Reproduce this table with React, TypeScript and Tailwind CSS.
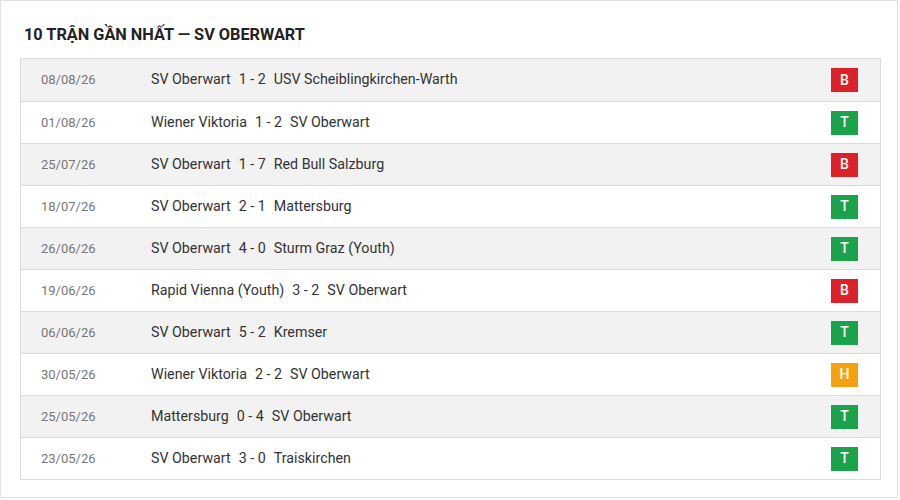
const matches = [
  { date: '08/08/26', home: 'SV Oberwart', score: '1 - 2', away: 'USV Scheiblingkirchen-Warth', result: 'B' },
  { date: '01/08/26', home: 'Wiener Viktoria', score: '1 - 2', away: 'SV Oberwart', result: 'T' },
  { date: '25/07/26', home: 'SV Oberwart', score: '1 - 7', away: 'Red Bull Salzburg', result: 'B' },
  { date: '18/07/26', home: 'SV Oberwart', score: '2 - 1', away: 'Mattersburg', result: 'T' },
  { date: '26/06/26', home: 'SV Oberwart', score: '4 - 0', away: 'Sturm Graz (Youth)', result: 'T' },
  { date: '19/06/26', home: 'Rapid Vienna (Youth)', score: '3 - 2', away: 'SV Oberwart', result: 'B' },
  { date: '06/06/26', home: 'SV Oberwart', score: '5 - 2', away: 'Kremser', result: 'T' },
  { date: '30/05/26', home: 'Wiener Viktoria', score: '2 - 2', away: 'SV Oberwart', result: 'H' },
  { date: '25/05/26', home: 'Mattersburg', score: '0 - 4', away: 'SV Oberwart', result: 'T' },
  { date: '23/05/26', home: 'SV Oberwart', score: '3 - 0', away: 'Traiskirchen', result: 'T' },
]

const badgeColor: Record<string, string> = {
  B: 'bg-[#db2228]',
  T: 'bg-[#1aa34a]',
  H: 'bg-[#f5a00f]',
}

export default function App() {
  return (
    <div className="w-[898px] h-[498px] border border-[#e2e2e2] bg-white font-['Roboto',sans-serif]">
      <h2 className="pl-[23px] pt-[23px] pb-[12px] text-[16.3px] leading-[22px] font-bold text-[#222] uppercase">
        10 Trận gần nhất — SV Oberwart
      </h2>

      <div className="ml-[19px] w-[861px] border border-[#dcdcdc]">
        {matches.map((m, i) => (
          <div
            key={i}
            className={`flex items-center h-[42px] ${i > 0 ? 'border-t border-[#dcdcdc]' : ''} ${
              i % 2 === 0 ? 'bg-[#f2f2f2]' : 'bg-white'
            }`}
          >
            <div className="w-[130px] pl-[20px] text-[13px] text-[#777]">{m.date}</div>
            <div className="flex-1 flex items-center gap-[8px] text-[14.25px] text-[#333]">
              <span>{m.home}</span>
              <span>{m.score}</span>
              <span>{m.away}</span>
            </div>
            <div className="pr-[22px]">
              <div
                className={`w-[27px] h-[24px] flex items-center justify-center text-white text-[14px] font-medium ${badgeColor[m.result]}`}
              >
                {m.result}
              </div>
            </div>
          </div>
        ))}
      </div>
    </div>
  )
}
